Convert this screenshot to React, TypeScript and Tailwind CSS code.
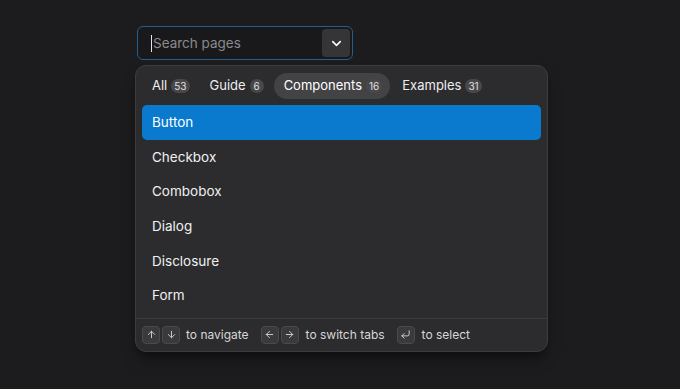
import { ChevronDown, ArrowUp, ArrowDown, ArrowLeft, ArrowRight, CornerDownLeft } from 'lucide-react';

const tabs = [
  { label: 'All', count: 53 },
  { label: 'Guide', count: 6 },
  { label: 'Components', count: 16, active: true },
  { label: 'Examples', count: 31 },
];

const items = ['Button', 'Checkbox', 'Combobox', 'Dialog', 'Disclosure', 'Form'];

function Key({ children }: { children: React.ReactNode }) {
  return (
    <span className="flex h-[18px] w-[18px] items-center justify-center rounded-[4px] border border-[#4a4a4e] bg-[#3a3a3d] text-[#d4d4d8]">
      {children}
    </span>
  );
}

export default function App() {
  return (
    <div
      className="h-[389px] w-full bg-[#1c1c1e] pl-[135px] pt-[26px]"
      style={{ fontFamily: 'Inter, "Noto Sans", sans-serif' }}
    >
      {/* Combobox input */}
      <div className="ml-[2px] flex h-[34px] w-[216px] items-center rounded-[6px] border border-[#215f92] bg-[#19191b] p-[2px]">
        <div className="flex flex-1 items-center pl-[11px] text-[13.5px] text-[#8a8a8f]">
          <span className="mr-[1px] h-[17px] w-px bg-[#e5e5e5]" />
          Search pages
        </div>
        <button className="flex h-full w-[28px] items-center justify-center rounded-[4px] bg-[#353538] text-white">
          <ChevronDown size={15} strokeWidth={2.5} />
        </button>
      </div>

      {/* Popover */}
      <div className="mt-[5px] w-[413px] overflow-hidden rounded-[11px] border border-[#3c3c3f] bg-[#2c2c2e] shadow-lg shadow-black/40">
        <div className="flex gap-[2px] px-[6px] pt-[7px]">
          {tabs.map((tab) => (
            <div
              key={tab.label}
              className={`flex h-[26px] items-center gap-[4px] rounded-full pl-[10px] pr-[8px] text-[13px] ${
                tab.active ? 'bg-[#434346] text-white' : 'text-[#ececee]'
              }`}
            >
              {tab.label}
              <span className="flex h-[14px] min-w-[14px] items-center justify-center rounded-full bg-[#48484b] px-[3px] text-[10px] text-[#e0e0e0]">
                {tab.count}
              </span>
            </div>
          ))}
        </div>

        <div className="px-[6px] pb-[5px] pt-[6px]">
          {items.map((item, i) => (
            <div
              key={item}
              className={`flex h-[34.6px] items-center rounded-[5px] px-[10px] text-[13.5px] ${
                i === 0 ? 'bg-[#0a7acf] text-white' : 'text-[#f0f0f2]'
              }`}
            >
              {item}
            </div>
          ))}
        </div>

        <div className="flex h-[33px] items-center gap-[12px] border-t border-[#3a3a3d] px-[6px] text-[12px] text-[#d6d6d8]">
          <div className="flex items-center gap-[2px]">
            <Key><ArrowUp size={11} strokeWidth={2} /></Key>
            <Key><ArrowDown size={11} strokeWidth={2} /></Key>
            <span className="ml-[4px]">to navigate</span>
          </div>
          <div className="flex items-center gap-[2px]">
            <Key><ArrowLeft size={11} strokeWidth={2} /></Key>
            <Key><ArrowRight size={11} strokeWidth={2} /></Key>
            <span className="ml-[5px]">to switch tabs</span>
          </div>
          <div className="flex items-center gap-[2px]">
            <Key><CornerDownLeft size={11} strokeWidth={2} /></Key>
            <span className="ml-[5px]">to select</span>
          </div>
        </div>
      </div>
    </div>
  );
}
